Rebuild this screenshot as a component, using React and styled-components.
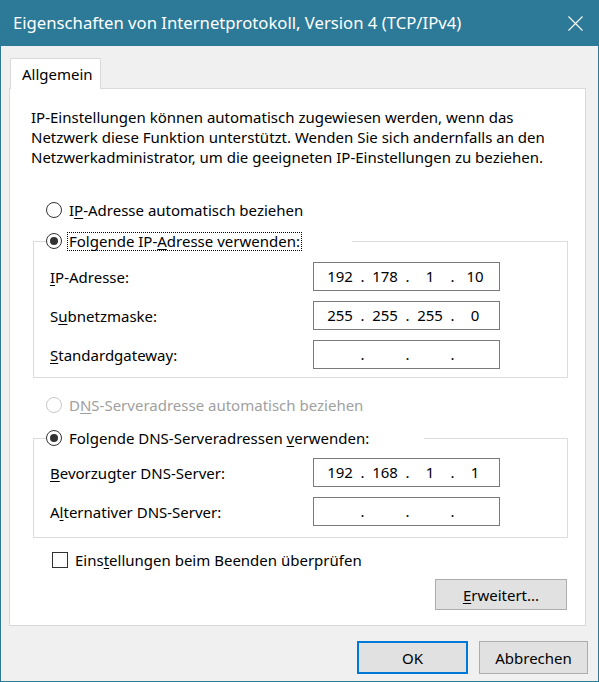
import React from 'react';
import styled, { createGlobalStyle } from 'styled-components';

const Global = createGlobalStyle`
  html, body { margin: 0; padding: 0; background: #f0f0f0; }
  body { font-family: "Noto Sans", "Open Sans", sans-serif; }
  * { box-sizing: border-box; }
`;

const FONT = `"Noto Sans", "Open Sans", "DejaVu Sans", sans-serif`;

const Window = styled.div`
  width: 599px;
  height: 682px;
  border: 1px solid #2c7a98;
  border-top: none;
  background: #f0f0f0;
  display: flex;
  flex-direction: column;
  font-family: ${FONT};
  font-size: 15px;
  color: #000;
`;

const TitleBar = styled.div`
  height: 46px;
  flex: none;
  background: #2c7a98;
  display: flex;
  align-items: center;
  justify-content: space-between;
  padding-left: 12px;
  color: #fff;
  font-size: 16.7px;
`;

const Title = styled.div`
  white-space: nowrap;
  padding-bottom: 1px;
`;

const CloseButton = styled.div`
  width: 46px;
  height: 46px;
  display: flex;
  align-items: center;
  justify-content: center;
`;

const TabStrip = styled.div`
  margin-top: 12px;
  padding-left: 9px;
  display: flex;
  position: relative;
  z-index: 1;
`;

const Tab = styled.div`
  width: 91px;
  height: 31px;
  margin-bottom: -1px;
  background: #fff;
  border: 1px solid #d9d9d9;
  border-bottom: none;
  padding-left: 11px;
  display: flex;
  align-items: center;
`;

const Panel = styled.div`
  margin-left: 8px;
  width: 577px;
  height: 538px;
  flex: none;
  background: #fff;
  border: 1px solid #d9d9d9;
  display: flex;
  flex-direction: column;
`;

const Description = styled.p`
  margin: 18px 0 0 21px;
  line-height: 20px;
  white-space: nowrap;
`;

const Key = styled.span`
  text-decoration: underline;
  text-underline-offset: 2px;
`;

const OptionRow = styled.div`
  display: flex;
  align-items: center;
  height: 20px;
  margin-top: ${p => p.$mt || 0}px;
  margin-left: ${p => p.$ml || 0}px;
  color: ${p => (p.$disabled ? '#a0a0a0' : '#000')};
  white-space: nowrap;
`;

const Radio = styled.span`
  width: 16px;
  height: 16px;
  flex: none;
  border-radius: 50%;
  border: 1px solid ${p => (p.$disabled ? '#c8c8c8' : '#333')};
  background: #fff;
  display: flex;
  align-items: center;
  justify-content: center;
  margin-right: 5px;
  &::after {
    content: '';
    width: 8px;
    height: 8px;
    border-radius: 50%;
    background: ${p => (p.$checked ? '#333' : 'transparent')};
  }
`;

const Check = styled.span`
  width: 16px;
  height: 16px;
  flex: none;
  border: 1px solid #333;
  background: #fff;
  margin-right: 5px;
`;

const OptionText = styled.span`
  line-height: 17px;
  padding: 0 1px;
  border: 1px ${p => (p.$focus ? 'dotted #000' : 'solid transparent')};
`;

const Group = styled.fieldset`
  margin: ${p => p.$mt}px 0 0 23px;
  width: 535px;
  padding: 0 0 ${p => p.$pb}px 0;
  border: 1px solid #dcdcdc;
  min-inline-size: 0;
`;

const Legend = styled.legend`
  margin-left: 12px;
  padding: 0;
  width: ${p => p.$w}px;
`;

const Fields = styled.div`
  margin-top: ${p => p.$mt}px;
  display: flex;
  flex-direction: column;
  gap: 10px;
`;

const FieldRow = styled.div`
  display: grid;
  grid-template-columns: 263px 187px;
  align-items: center;
  padding-left: 16px;
`;

const IpBox = styled.div`
  width: 187px;
  height: 29px;
  border: 1px solid #7a7a7a;
  background: #fff;
  display: grid;
  grid-template-columns: 36px 9px 36px 9px 36px 9px 36px;
  align-items: center;
  padding-left: 8px;
  padding-bottom: 1px;
`;

const Octet = styled.span`
  text-align: center;
`;

const Dot = styled.span`
  text-align: center;
`;

const ButtonRow = styled.div`
  display: flex;
  justify-content: flex-end;
  gap: 11px;
  margin-top: ${p => p.$mt}px;
  padding-right: ${p => p.$pr}px;
`;

const Button = styled.div`
  width: ${p => p.$w}px;
  height: ${p => p.$h}px;
  background: #e1e1e1;
  border: ${p => (p.$default ? '2px solid #0078d7' : '1px solid #adadad')};
  display: flex;
  align-items: center;
  justify-content: center;
`;

function IpField({ value }) {
  const parts = value ? value.split('.') : ['', '', '', ''];
  return (
    <IpBox>
      <Octet>{parts[0]}</Octet>
      <Dot>.</Dot>
      <Octet>{parts[1]}</Octet>
      <Dot>.</Dot>
      <Octet>{parts[2]}</Octet>
      <Dot>.</Dot>
      <Octet>{parts[3]}</Octet>
    </IpBox>
  );
}

export default function App() {
  return (
    <>
      <Global />
      <Window>
        <TitleBar>
          <Title>Eigenschaften von Internetprotokoll, Version 4 (TCP/IPv4)</Title>
          <CloseButton>
            <svg width="15" height="15" viewBox="0 0 15 15">
              <path d="M0.5 0.5 L14.5 14.5 M14.5 0.5 L0.5 14.5" stroke="#fff" strokeWidth="1.1" />
            </svg>
          </CloseButton>
        </TitleBar>

        <TabStrip>
          <Tab>Allgemein</Tab>
        </TabStrip>

        <Panel>
          <Description>
            IP-Einstellungen können automatisch zugewiesen werden, wenn das<br />
            Netzwerk diese Funktion unterstützt. Wenden Sie sich andernfalls an den<br />
            Netzwerkadministrator, um die geeigneten IP-Einstellungen zu beziehen.
          </Description>

          <OptionRow $mt={33} $ml={36}>
            <Radio />
            <OptionText>I<Key>P</Key>-Adresse automatisch beziehen</OptionText>
          </OptionRow>

          <Group $mt={11} $pb={8}>
            <Legend $w={306}>
              <OptionRow>
                <Radio $checked />
                <OptionText $focus>Folgende IP-<Key>A</Key>dresse verwenden:</OptionText>
              </OptionRow>
            </Legend>
            <Fields $mt={11}>
              <FieldRow>
                <span><Key>I</Key>P-Adresse:</span>
                <IpField value="192.178.1.10" />
              </FieldRow>
              <FieldRow>
                <span>S<Key>u</Key>bnetzmaske:</span>
                <IpField value="255.255.255.0" />
              </FieldRow>
              <FieldRow>
                <span><Key>S</Key>tandardgateway:</span>
                <IpField />
              </FieldRow>
            </Fields>
          </Group>

          <OptionRow $mt={17} $ml={36} $disabled>
            <Radio $disabled />
            <OptionText>D<Key>N</Key>S-Serveradresse automatisch beziehen</OptionText>
          </OptionRow>

          <Group $mt={13} $pb={11}>
            <Legend $w={378}>
              <OptionRow>
                <Radio $checked />
                <OptionText>Folgende DNS-Serveradressen <Key>v</Key>erwenden:</OptionText>
              </OptionRow>
            </Legend>
            <Fields $mt={10}>
              <FieldRow>
                <span><Key>B</Key>evorzugter DNS-Server:</span>
                <IpField value="192.168.1.1" />
              </FieldRow>
              <FieldRow>
                <span>A<Key>l</Key>ternativer DNS-Server:</span>
                <IpField />
              </FieldRow>
            </Fields>
          </Group>

          <OptionRow $mt={12} $ml={42}>
            <Check />
            <OptionText>Eins<Key>t</Key>ellungen beim Beenden überprüfen</OptionText>
          </OptionRow>

          <ButtonRow $mt={9} $pr={18}>
            <Button $w={132} $h={31}><span><Key>E</Key>rweitert...</span></Button>
          </ButtonRow>
        </Panel>

        <ButtonRow $mt={15} $pr={10}>
          <Button $w={111} $h={33} $default>OK</Button>
          <Button $w={109} $h={33}>Abbrechen</Button>
        </ButtonRow>
      </Window>
    </>
  );
}
